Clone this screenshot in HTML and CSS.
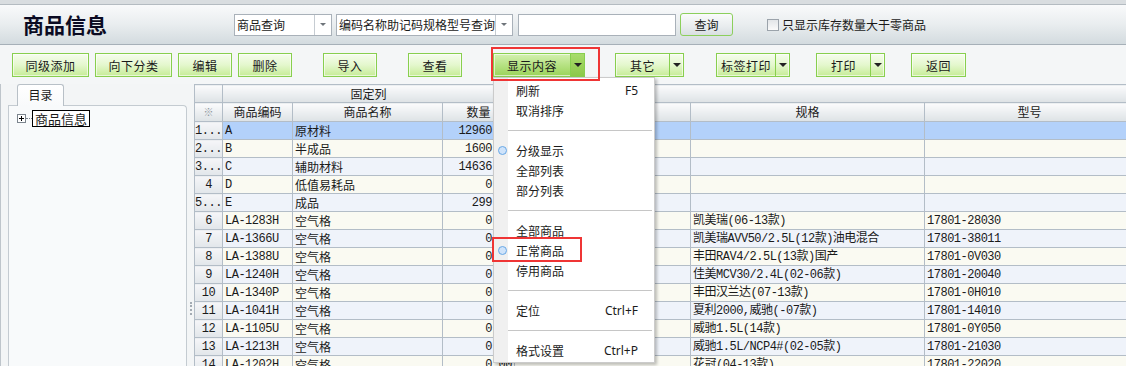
FILE: index.html
```html
<!DOCTYPE html>
<html lang="zh-CN">
<head>
    <meta charset="UTF-8">
    <meta name="viewport" content="width=device-width, initial-scale=1.0">
    <title>商品信息</title>
    <link rel="stylesheet" href="styles.css">
</head>
<body>
<div class="page">
    <div class="topbar">
        <h1 class="title">商品信息</h1>
        <div class="select sel-type"><span>商品查询</span><i class="sel-arrow"></i></div>
        <div class="select sel-field"><span>编码名称助记码规格型号查询</span><i class="sel-arrow"></i></div>
        <input class="search" type="text">
        <button class="query-btn">查询</button>
        <label class="stock-check"><span class="box"></span>只显示库存数量大于零商品</label>
    </div>

    <div class="toolbar">
        <div class="btn w4">同级添加</div>
        <div class="btn w4">向下分类</div>
        <div class="btn w2">编辑</div>
        <div class="btn w2">删除</div>
        <div class="btn w2 far">导入</div>
        <div class="btn w2 far">查看</div>
        <div class="split active far">
            <span class="btn-main show-main">显示内容</span><span class="btn-arrow"><i class="tri"></i></span>
            <div class="mark mark-btn"></div>
            <div class="menu">
                <div class="menu-item"><span class="dot-col"></span><span class="label">刷新</span><span class="key">F5</span></div>
                <div class="menu-item"><span class="dot-col"></span><span class="label">取消排序</span></div>
                <div class="menu-sep"></div>
                <div class="menu-item"><span class="dot-col"><i class="dot"></i></span><span class="label">分级显示</span></div>
                <div class="menu-item"><span class="dot-col"></span><span class="label">全部列表</span></div>
                <div class="menu-item"><span class="dot-col"></span><span class="label">部分列表</span></div>
                <div class="menu-sep"></div>
                <div class="menu-item"><span class="dot-col"></span><span class="label">全部商品</span></div>
                <div class="menu-item"><span class="dot-col"><i class="dot"></i></span><span class="label">正常商品</span><div class="mark mark-item"></div></div>
                <div class="menu-item"><span class="dot-col"></span><span class="label">停用商品</span></div>
                <div class="menu-sep"></div>
                <div class="menu-item"><span class="dot-col"></span><span class="label">定位</span><span class="key">Ctrl+F</span></div>
                <div class="menu-sep"></div>
                <div class="menu-item"><span class="dot-col"></span><span class="label">格式设置</span><span class="key">Ctrl+P</span></div>
            </div>
        </div>
        <div class="split other"><span class="btn-main">其它</span><span class="btn-arrow"><i class="tri"></i></span></div>
        <div class="split label-print"><span class="btn-main">标签打印</span><span class="btn-arrow"><i class="tri"></i></span></div>
        <div class="split print near"><span class="btn-main">打印</span><span class="btn-arrow"><i class="tri"></i></span></div>
        <div class="btn back near">返回</div>
    </div>

    <div class="main">
        <div class="sidebar">
            <div class="tab">目录</div>
            <div class="panel">
                <div class="tree-node">
                    <svg class="expander" width="9" height="9" viewBox="0 0 9 9">
                        <rect x="0.5" y="0.5" width="8" height="8" fill="#fff" stroke="#7c858e"/>
                        <path d="M2 4.5h5M4.5 2v5" stroke="#000" stroke-width="1"/>
                    </svg>
                    <span class="tree-line"></span>
                    <span class="node-label">商品信息</span>
                </div>
            </div>
        </div>
        <div class="splitter"><i class="grip"></i></div>

        <div class="grid">
            <table>
                <colgroup>
                    <col style="width:28px"><col style="width:70px"><col style="width:150px"><col style="width:72px">
                    <col style="width:176px"><col style="width:234px"><col style="width:210px">
                </colgroup>
                <thead>
                    <tr class="group-row">
                        <th></th>
                        <th colspan="3">固定列</th>
                        <th colspan="3"></th>
                    </tr>
                    <tr class="head-row">
                        <th class="star">※</th>
                        <th>商品编码</th>
                        <th>商品名称</th>
                        <th>数量</th>
                        <th></th>
                        <th>规格</th>
                        <th>型号</th>
                    </tr>
                </thead>
                <tbody>
                    <tr class="selected"><td class="rn">1...</td><td>A</td><td class="cn">原材料</td><td class="num">12960.00</td><td></td><td></td><td></td></tr>
                    <tr><td class="rn">2...</td><td>B</td><td class="cn">半成品</td><td class="num">1600.00</td><td></td><td></td><td></td></tr>
                    <tr><td class="rn">3...</td><td>C</td><td class="cn">辅助材料</td><td class="num">14636.00</td><td></td><td></td><td></td></tr>
                    <tr><td class="rn">4</td><td>D</td><td class="cn">低值易耗品</td><td class="num">0.00</td><td></td><td></td><td></td></tr>
                    <tr><td class="rn">5...</td><td>E</td><td class="cn">成品</td><td class="num">299.00</td><td></td><td></td><td></td></tr>
                    <tr><td class="rn">6</td><td>LA-1283H</td><td class="cn">空气格</td><td class="num">0.00</td><td></td><td>凯美瑞(06-13款)</td><td>17801-28030</td></tr>
                    <tr><td class="rn">7</td><td>LA-1366U</td><td class="cn">空气格</td><td class="num">0.00</td><td></td><td>凯美瑞AVV50/2.5L(12款)油电混合</td><td>17801-38011</td></tr>
                    <tr><td class="rn">8</td><td>LA-1388U</td><td class="cn">空气格</td><td class="num">0.00</td><td></td><td>丰田RAV4/2.5L(13款)国产</td><td>17801-0V030</td></tr>
                    <tr><td class="rn">9</td><td>LA-1240H</td><td class="cn">空气格</td><td class="num">0.00</td><td></td><td>佳美MCV30/2.4L(02-06款)</td><td>17801-20040</td></tr>
                    <tr><td class="rn">10</td><td>LA-1340P</td><td class="cn">空气格</td><td class="num">0.00</td><td></td><td>丰田汉兰达(07-13款)</td><td>17801-0H010</td></tr>
                    <tr><td class="rn">11</td><td>LA-1041H</td><td class="cn">空气格</td><td class="num">0.00</td><td></td><td>夏利2000,威驰(-07款)</td><td>17801-14010</td></tr>
                    <tr><td class="rn">12</td><td>LA-1105U</td><td class="cn">空气格</td><td class="num">0.00</td><td></td><td>威驰1.5L(14款)</td><td>17801-0Y050</td></tr>
                    <tr><td class="rn">13</td><td>LA-1213H</td><td class="cn">空气格</td><td class="num">0.00</td><td></td><td>威驰1.5L/NCP4#(02-05款)</td><td>17801-21030</td></tr>
                    <tr><td class="rn">14</td><td>LA-1202H</td><td class="cn">空气格</td><td class="num">0.00</td><td></td><td>花冠(04-13款)</td><td>17801-22020</td></tr>
                </tbody>
            </table>
        </div>
    </div>
</div>
</body>
</html>
```

FILE: styles.css
```css
* {
    box-sizing: border-box;
}

body {
    margin: 0;
    background: #d9dde0;
    font-family: "Noto Sans CJK SC", sans-serif;
    font-size: 12px;
    color: #1a1a1a;
    overflow: hidden;
}

.page {
    padding-top: 4px;
    height: 100vh;
    display: flex;
    flex-direction: column;
}

/* top search bar */
.topbar {
    height: 41px;
    flex: none;
    display: flex;
    align-items: center;
    padding-left: 23px;
    border-top: 1px solid #b4bbc1;
    border-bottom: 1px solid #a6b0b8;
    background: linear-gradient(#f9fafb, #e9edef 50%, #d3dbdf);
}

.title {
    margin: 0;
    width: 211px;
    font-size: 21px;
    font-weight: bold;
    line-height: 1;
    color: #0a0a22;
}

.select {
    height: 22px;
    display: flex;
    background: #fff;
    border: 1px solid #a9b1b9;
}

.select span {
    flex: 1;
    padding-left: 2px;
    line-height: 20px;
    white-space: nowrap;
}

.sel-arrow {
    width: 17px;
    border-left: 1px solid #c6ccd2;
    position: relative;
}

.sel-arrow::after {
    content: "";
    position: absolute;
    left: 5px;
    top: 8px;
    border-left: 3px solid transparent;
    border-right: 3px solid transparent;
    border-top: 3px solid #6e747a;
}

.sel-type {
    width: 98px;
}

.sel-field {
    width: 177px;
    margin-left: 4px;
}

.search {
    width: 158px;
    height: 22px;
    margin: 0 0 0 5px;
    border: 1px solid #a9b1b9;
    background: #fff;
}

.query-btn {
    width: 53px;
    height: 23px;
    margin-left: 4px;
    padding: 0;
    border: 1px solid #8ccf5c;
    border-radius: 3px;
    background: linear-gradient(#fafbfb, #e8ecee 60%, #d9dfe2);
    font-family: inherit;
    font-size: 12px;
    color: #1a1a1a;
}

.stock-check {
    margin-left: 34px;
    display: flex;
    align-items: center;
    gap: 3px;
}

.stock-check .box {
    width: 12px;
    height: 12px;
    border: 1px solid #9ba3ab;
    background: linear-gradient(#e2e5e8, #fafafa);
}

/* toolbar */
.toolbar {
    height: 39px;
    flex: none;
    display: flex;
    align-items: flex-start;
    gap: 6px;
    padding: 8px 0 0 12px;
    background: #f4f6f7;
}

.btn, .split {
    height: 24px;
    border: 1px solid #88cf4e;
    background: linear-gradient(#f6fdee, #e4f7cd 50%, #c6ec97);
    box-shadow: inset 0 0 0 1px rgba(255, 255, 255, 0.6);
    letter-spacing: 0.5px;
}

.btn {
    display: flex;
    align-items: center;
    justify-content: center;
}

.w4 {
    width: 77px;
}

.w2 {
    width: 54px;
}

.back {
    width: 55px;
}

.far {
    margin-left: 25px;
}

.near {
    margin-left: 20px;
}

.split {
    display: flex;
    position: relative;
}

.btn-main {
    flex: 1;
    display: flex;
    align-items: center;
    justify-content: center;
}

.btn-arrow {
    width: 14px;
    border-left: 1px solid #88cf4e;
    display: flex;
    align-items: center;
    justify-content: center;
}

.tri {
    border-left: 4px solid transparent;
    border-right: 4px solid transparent;
    border-top: 4px solid #222;
}

.active {
    width: 92px;
    background: linear-gradient(#d4f0b0, #b6e283 50%, #9bd35a);
}

.active .btn-arrow {
    background: linear-gradient(#a9dc6c, #8cc84a);
}

.other {
    width: 69px;
    margin-left: 24px;
}

.label-print {
    width: 74px;
    margin-left: 26px;
}

.print {
    width: 69px;
}

/* red annotation boxes */
.mark {
    position: absolute;
    border: 2px solid #ef3535;
    z-index: 20;
}

.mark-btn {
    left: -3px;
    top: -7px;
    width: 109px;
    height: 34px;
}

.mark-item {
    left: -2px;
    top: -3px;
    width: 90px;
    height: 25px;
}

/* dropdown menu */
.menu {
    position: absolute;
    left: -1px;
    top: calc(100% + 1px);
    width: 162px;
    padding: 2px 0;
    border: 1px solid #cbcbcb;
    background: linear-gradient(to right, #f0f0f0 14px, #fff 14px);
    box-shadow: 2px 2px 3px rgba(0, 0, 0, 0.25);
    z-index: 10;
    letter-spacing: 0;
}

.menu-item {
    position: relative;
    height: 20px;
    display: flex;
    align-items: center;
    padding-right: 16px;
}

.dot-col {
    width: 22px;
    flex: none;
    display: flex;
    align-items: center;
    padding-left: 4px;
}

.dot {
    width: 9px;
    height: 9px;
    border-radius: 50%;
    border: 1px solid #68a8e6;
    background: #cfe3fa;
}

.label {
    flex: 1;
    color: #1b1b1b;
}

.key {
    font-family: "Noto Sans", sans-serif;
    font-size: 12px;
    color: #1b1b1b;
}

.menu-sep {
    height: 1px;
    margin: 10px 2px 9px 14px;
    background: #c6c6c6;
}

/* main area */
.main {
    flex: 1;
    display: flex;
    min-height: 0;
    background: #f3f5f6;
}

.sidebar {
    width: 187px;
    flex: none;
    display: flex;
    flex-direction: column;
    border-left: 1px solid #bec5cb;
    padding-left: 7px;
}

.tab {
    width: 47px;
    height: 22px;
    margin: 0 0 -1px 9px;
    position: relative;
    z-index: 1;
    border: 1px solid #b8c0c7;
    border-bottom: none;
    border-radius: 3px 3px 0 0;
    background: linear-gradient(#ffffff, #f8fafb);
    text-align: center;
    line-height: 19px;
}

.panel {
    flex: 1;
    border: 1px solid #c4cbd1;
    border-bottom: none;
    border-radius: 0 4px 0 0;
    background: #f8fafb;
    padding: 4px 0 0 8px;
}

.tree-node {
    display: flex;
    align-items: center;
}

.tree-line {
    width: 6px;
    border-top: 1px dotted #7c858e;
}

.node-label {
    height: 17px;
    padding: 0 2px;
    border: 1px solid #000;
    background: #fff;
    font-size: 13px;
    line-height: 15px;
}

.splitter {
    width: 7px;
    flex: none;
    padding: 218px 0 0 3px;
}

.grip {
    display: block;
    width: 2px;
    height: 13px;
    border-left: 2px dotted #a3abb3;
}

/* grid */
.grid {
    flex: 1;
    overflow: hidden;
}

table {
    width: 940px;
    table-layout: fixed;
    border-collapse: collapse;
}

th, td {
    border: 1px solid #b3bdc7;
    padding: 0;
    white-space: nowrap;
    overflow: hidden;
}

th {
    font-weight: normal;
    text-align: center;
    line-height: 16px;
    background: linear-gradient(#fbfbfc, #eceff1 50%, #dde2e5);
}

.group-row {
    height: 18px;
}

.head-row {
    height: 19px;
}

.star {
    color: #8e969e;
    font-size: 10px;
}

tbody tr {
    height: 18px;
    background: #eff3fa;
}

tbody tr:nth-child(even) {
    background: #fafaf2;
}

tbody tr.selected {
    background: #b3d1fa;
}

td {
    font-family: "Liberation Mono", "Noto Sans CJK SC", monospace;
    font-size: 12px;
    letter-spacing: -0.5px;
    line-height: 16px;
    padding-left: 2px;
}

td.cn {
    font-family: "Noto Sans CJK SC", sans-serif;
    letter-spacing: 0;
}

td.num {
    text-align: right;
    padding-right: 2px;
}

td.rn {
    padding: 0;
    text-align: center;
    background: linear-gradient(#f5f6f8, #e2e6ea);
}
```
